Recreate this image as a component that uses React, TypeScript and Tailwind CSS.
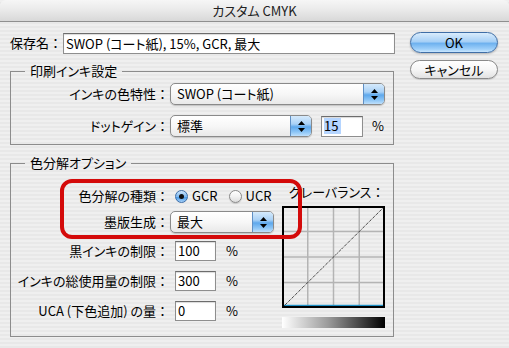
import React from 'react';

function Arrows() {
  return (
    <svg width="7" height="11" viewBox="0 0 7 11">
      <path d="M3.5 0 L7 4 L0 4 Z" fill="#000" />
      <path d="M0 7 L7 7 L3.5 11 Z" fill="#000" />
    </svg>
  );
}

function Popup({ text, className }: { text: string; className: string }) {
  return (
    <div className={`flex h-[22px] overflow-hidden rounded-[5px] border border-[#8a8a8a] bg-[linear-gradient(180deg,#ffffff_0%,#f7f7f7_50%,#e9e9e9_100%)] shadow-[0_1px_1px_rgba(0,0,0,0.18)] ${className}`}>
      <div className="flex flex-1 items-center pl-[6px] leading-[16px]">{text}</div>
      <div className="flex w-[21px] items-center justify-center border-l border-[#5f8fc4] bg-[linear-gradient(180deg,#d5eafc_0%,#a9d1f6_40%,#5ea8ec_55%,#8cc5f6_80%,#bfe0fc_100%)]">
        <Arrows />
      </div>
    </div>
  );
}

function Field({ value, className, selected }: { value: string; className: string; selected?: boolean }) {
  return (
    <div className={`flex items-center border border-[#8e8e8e] border-t-[#6c6c6c] bg-white pl-[2px] leading-[16px] shadow-[inset_0_1px_1px_rgba(0,0,0,0.15)] ${className}`}>
      {selected ? <span className="bg-[#b5d5ff] pr-[3px]">{value}</span> : value}
    </div>
  );
}

function Radio({ on, label }: { on?: boolean; label: string }) {
  return (
    <div className="flex items-center">
      {on ? (
        <div className="flex h-[13px] w-[13px] items-center justify-center rounded-full border border-[#3d6ea8] bg-[linear-gradient(180deg,#cfe6fb_0%,#7fb9f0_50%,#4f9de8_60%,#a7d2fa_100%)]">
          <div className="h-[5px] w-[5px] rounded-full bg-[#111]" />
        </div>
      ) : (
        <div className="h-[13px] w-[13px] rounded-full border border-[#8a8a8a] bg-[linear-gradient(180deg,#ffffff_0%,#f2f2f2_50%,#dcdcdc_100%)] shadow-[0_1px_1px_rgba(0,0,0,0.15)]" />
      )}
      <span className="ml-[4px] leading-[16px]">{label}</span>
    </div>
  );
}

// full-width colon keeps its em box (no palt)
function Colon() {
  return <span className="[font-feature-settings:normal]">：</span>;
}

function Label({ children }: { children: React.ReactNode }) {
  return (
    <div className="w-[158px] shrink-0 whitespace-nowrap text-right leading-[16px]">
      {children}
      <Colon />
    </div>
  );
}

function GrayGraph() {
  return (
    <svg width="103" height="102" viewBox="0 0 103 102">
      <g stroke="#b4b4b4" strokeWidth="1.5">
        <line x1="25.75" y1="1" x2="25.75" y2="101" />
        <line x1="51.5" y1="1" x2="51.5" y2="101" />
        <line x1="77.25" y1="1" x2="77.25" y2="101" />
        <line x1="1" y1="25.5" x2="102" y2="25.5" />
        <line x1="1" y1="51" x2="102" y2="51" />
        <line x1="1" y1="76.5" x2="102" y2="76.5" />
      </g>
      <line x1="2" y1="99.5" x2="101" y2="99.5" stroke="#1e8fc4" strokeWidth="1.5" />
      <line x1="1.5" y1="100.5" x2="101.5" y2="1.5" stroke="#000" strokeWidth="1" strokeDasharray="1 1" />
      <rect x="1" y="1" width="101" height="100" fill="none" stroke="#000" strokeWidth="2" />
    </svg>
  );
}

export default function App() {
  return (
    <div className="relative h-[348px] w-[509px] overflow-hidden bg-[repeating-linear-gradient(180deg,#efefef_0px,#efefef_2px,#e8e8e8_2px,#e8e8e8_4px)] font-['Noto_Sans_CJK_JP','Noto_Sans',sans-serif] text-[13px] text-black [font-feature-settings:'palt']">
      {/* title bar */}
      <div className="flex h-[22px] items-center justify-center rounded-t-[6px] border-b border-[#8f8f8f] bg-[linear-gradient(180deg,#f6f6f6_0%,#e9e9e9_50%,#d8d8d8_100%)] leading-[16px] text-[#222]">
        カスタム CMYK
      </div>

      <div className="flex pl-[10px] pt-[10px]">
        <div className="w-[385px]">
          {/* save name */}
          <div className="flex h-[22px] items-center">
            <div className="whitespace-nowrap leading-[16px]">
              保存名<Colon />
            </div>
            <Field value="SWOP (コート紙), 15%, GCR, 最大" className="ml-[1px] mt-[1px] h-[21px] flex-1" />
          </div>

          {/* ink settings */}
          <fieldset className="m-0 mt-[9px] w-[384px] border border-[#8c8c8c] p-0 pb-[7px] pt-[4px]">
            <legend className="ml-[14px] px-[5px] leading-[16px]">印刷インキ設定</legend>
            <div className="flex h-[22px] items-center">
              <Label>インキの色特性</Label>
              <Popup text="SWOP (コート紙)" className="ml-[1px] w-[215px]" />
            </div>
            <div className="mt-[10px] flex h-[22px] items-center">
              <Label>ドットゲイン</Label>
              <Popup text="標準" className="ml-[1px] w-[142px]" />
              <Field value="15" selected className="ml-[9px] h-[21px] w-[42px]" />
              <span className="ml-[9px] leading-[16px]">%</span>
            </div>
          </fieldset>

          {/* separation options */}
          <fieldset className="m-0 mt-[10px] w-[384px] border border-[#8c8c8c] p-0">
            <legend className="ml-[14px] px-[5px] leading-[16px]">色分解オプション</legend>
            <div className="flex">
              <div className="w-[271px] pb-[15px] pt-[15px]">
                <div className="flex h-[20px] items-center">
                  <Label>色分解の種類</Label>
                  <div className="ml-[6px] flex items-center gap-[11px]">
                    <Radio on label="GCR" />
                    <Radio label="UCR" />
                  </div>
                </div>
                <div className="mt-[5px] flex h-[22px] items-center">
                  <Label>墨版生成</Label>
                  <Popup text="最大" className="ml-[1px] w-[104px]" />
                </div>
                <div className="mt-[8px] flex h-[20px] items-center">
                  <Label>黒インキの制限</Label>
                  <Field value="100" className="ml-[6px] h-[20px] w-[41px]" />
                  <span className="ml-[10px] leading-[16px]">%</span>
                </div>
                <div className="mt-[10px] flex h-[20px] items-center">
                  <Label>インキの総使用量の制限</Label>
                  <Field value="300" className="ml-[6px] h-[20px] w-[41px]" />
                  <span className="ml-[10px] leading-[16px]">%</span>
                </div>
                <div className="mt-[10px] flex h-[20px] items-center">
                  <Label>UCA (下色追加) の量</Label>
                  <Field value="0" className="ml-[6px] h-[20px] w-[41px]" />
                  <span className="ml-[10px] leading-[16px]">%</span>
                </div>
              </div>
              <div className="w-[103px] pt-[13px]">
                <div className="whitespace-nowrap pl-[7px] leading-[16px]">
                  グレーバランス<Colon />
                </div>
                <div className="mt-[6px] flex">
                  <GrayGraph />
                </div>
                <div className="mt-[9px] h-[11px] w-[103px] bg-[linear-gradient(90deg,#ffffff_0%,#9a9a9a_45%,#000000_100%)]" />
              </div>
            </div>
          </fieldset>
        </div>

        {/* buttons */}
        <div className="ml-[15px] flex w-[88px] flex-col gap-[7px]">
          <div className="flex h-[21px] items-center justify-center rounded-full border border-[#3f6ea6] bg-[linear-gradient(180deg,#d9ecfc_0%,#a7d0f6_45%,#6fb2ef_55%,#9fd0fa_85%,#c9e6fd_100%)] leading-[16px] shadow-[0_1px_2px_rgba(0,0,0,0.25)]">
            OK
          </div>
          <div className="flex h-[19px] items-center justify-center rounded-full border border-[#8a8a8a] bg-[linear-gradient(180deg,#ffffff_0%,#f6f6f6_50%,#e2e2e2_100%)] leading-[16px] shadow-[0_1px_1px_rgba(0,0,0,0.15)]">
            キャンセル
          </div>
        </div>
      </div>

      {/* red annotation */}
      <div className="pointer-events-none absolute left-[60px] top-[179px] h-[60px] w-[242px] rounded-[12px] border-[4px] border-[#d40a0a]" />
    </div>
  );
}
